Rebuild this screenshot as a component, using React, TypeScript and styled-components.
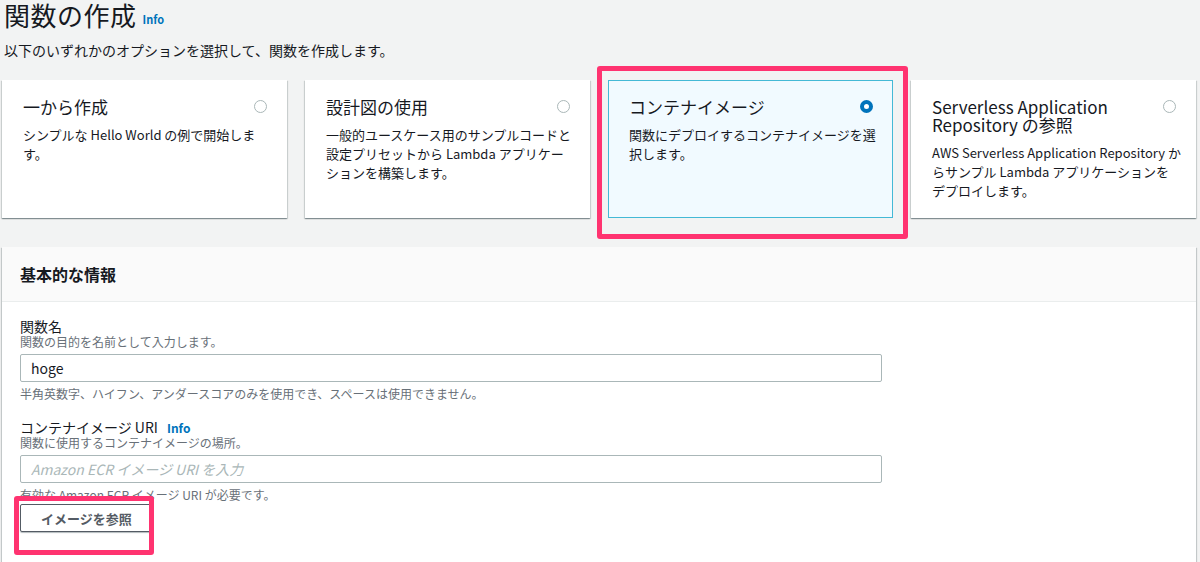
import React from 'react'
import styled, { createGlobalStyle } from 'styled-components'

const GlobalStyle = createGlobalStyle`
  html, body {
    margin: 0;
    padding: 0;
    background: #f2f3f3;
  }
  body {
    font-family: "Noto Sans CJK JP", "Noto Sans", sans-serif;
    color: #16191f;
  }
`

const Page = styled.div`
  position: relative;
  width: 1200px;
  height: 562px;
  overflow: hidden;
  padding: 0 4px 0 2px;
  box-sizing: border-box;
`

const Title = styled.h1`
  display: flex;
  align-items: center;
  margin: 0;
  padding-left: 2px;
  height: 30px;
  font-size: 26px;
  line-height: 32px;
  font-weight: 400;
  letter-spacing: 0.5px;
`

const InfoLink = styled.a<{ $inline?: boolean }>`
  margin: ${p => (p.$inline ? '0 0 0 9px' : '8px 0 0 6px')};
  font-size: ${p => (p.$inline ? 12 : 11)}px;
  line-height: 16px;
  font-weight: 700;
  color: #0073bb;
  letter-spacing: 0;
  text-decoration: none;
`

const Subtitle = styled.p`
  margin: 10px 0 0;
  padding-left: 2px;
  font-size: 14px;
  line-height: 20px;
`

const CardGrid = styled.div`
  display: grid;
  grid-template-columns: repeat(4, 1fr);
  gap: 18px;
  margin-top: 20px;
`

const Card = styled.div<{ $selected?: boolean }>`
  display: flex;
  flex-direction: column;
  min-height: 138px;
  box-sizing: border-box;
  padding: 17px 14px 0 20px;
  background: ${p => (p.$selected ? '#f1faff' : '#ffffff')};
  border: 1px solid ${p => (p.$selected ? '#44b9d6' : 'transparent')};
  box-shadow: ${p =>
    p.$selected
      ? 'none'
      : '0 1px 1px 0 rgba(0, 28, 36, 0.3), 1px 1px 1px 0 rgba(0, 28, 36, 0.12), -1px 1px 1px 0 rgba(0, 28, 36, 0.12)'};
`

const CardHead = styled.div`
  display: flex;
  align-items: flex-start;
  justify-content: space-between;
  gap: 12px;
`

const CardTitle = styled.div`
  font-size: 17px;
  line-height: 18px;
`

const Radio = styled.span<{ $checked?: boolean }>`
  flex: none;
  width: 13px;
  height: 13px;
  margin: 2px 5px 0 0;
  box-sizing: border-box;
  border-radius: 50%;
  background: #ffffff;
  border: ${p => (p.$checked ? '4px solid #0073bb' : '1px solid #aab7b8')};
`

const CardText = styled.div`
  margin-top: 9px;
  font-size: 13px;
  line-height: 19px;
`

const Panel = styled.section`
  margin-top: 29px;
  background: #ffffff;
  box-shadow: 0 1px 1px 0 rgba(0, 28, 36, 0.3), 1px 1px 1px 0 rgba(0, 28, 36, 0.15),
    -1px 1px 1px 0 rgba(0, 28, 36, 0.15);
`

const PanelHeader = styled.div`
  display: flex;
  align-items: center;
  height: 54px;
  padding-left: 18px;
  background: #fafafa;
  border-bottom: 1px solid #eaeded;
  font-size: 16px;
  font-weight: 700;
`

const PanelBody = styled.div`
  display: flex;
  flex-direction: column;
  gap: 17px;
  padding: 16px 18px 40px;
`

const Field = styled.div`
  display: flex;
  flex-direction: column;
  align-items: flex-start;
`

const Label = styled.label`
  display: flex;
  align-items: baseline;
  font-size: 14px;
  line-height: 17px;
`

const Description = styled.div`
  font-size: 12px;
  line-height: 14px;
  color: #687078;
`

const Hint = styled.div`
  margin-top: 4px;
  font-size: 12px;
  line-height: 16px;
  color: #687078;
`

const TextInput = styled.input`
  width: 862px;
  height: 28px;
  margin-top: 5px;
  box-sizing: border-box;
  padding: 0 10px;
  border: 1px solid #aab7b8;
  border-radius: 2px;
  background: #ffffff;
  font-family: "Noto Sans CJK JP", "Noto Sans", sans-serif;
  font-size: 14px;
  color: #16191f;
  outline: none;

  &::placeholder {
    color: #aab7b8;
    font-style: italic;
  }
`

const Button = styled.button`
  margin-top: 1px;
  height: 28px;
  padding: 0 20px;
  background: #ffffff;
  border: 1px solid #545b64;
  border-radius: 2px;
  box-shadow: 0 1px 1px 0 rgba(0, 28, 36, 0.3);
  font-family: "Noto Sans CJK JP", "Noto Sans", sans-serif;
  font-size: 13px;
  font-weight: 700;
  color: #545b64;
`

const Highlight = styled.div<{ $x: number; $y: number; $w: number; $h: number }>`
  position: absolute;
  left: ${p => p.$x}px;
  top: ${p => p.$y}px;
  width: ${p => p.$w}px;
  height: ${p => p.$h}px;
  box-sizing: border-box;
  border: 5px solid #ff3370;
  border-radius: 3px;
  pointer-events: none;
`

const cards = [
  { title: '一から作成', text: 'シンプルな Hello World の例で開始します。' },
  { title: '設計図の使用', text: '一般的ユースケース用のサンプルコードと設定プリセットから Lambda アプリケーションを構築します。' },
  { title: 'コンテナイメージ', text: '関数にデプロイするコンテナイメージを選択します。', selected: true },
  {
    title: 'Serverless Application Repository の参照',
    text: 'AWS Serverless Application Repository からサンプル Lambda アプリケーションをデプロイします。',
  },
]

const App: React.FC = () => {
  return (
    <>
      <GlobalStyle />
      <Page>
        <Title>
          関数の作成<InfoLink>Info</InfoLink>
        </Title>
        <Subtitle>以下のいずれかのオプションを選択して、関数を作成します。</Subtitle>

        <CardGrid>
          {cards.map(card => (
            <Card key={card.title} $selected={card.selected}>
              <CardHead>
                <CardTitle>{card.title}</CardTitle>
                <Radio $checked={card.selected} />
              </CardHead>
              <CardText>{card.text}</CardText>
            </Card>
          ))}
        </CardGrid>

        <Panel>
          <PanelHeader>基本的な情報</PanelHeader>
          <PanelBody>
            <Field>
              <Label>関数名</Label>
              <Description>関数の目的を名前として入力します。</Description>
              <TextInput defaultValue="hoge" />
              <Hint>半角英数字、ハイフン、アンダースコアのみを使用でき、スペースは使用できません。</Hint>
            </Field>
            <Field>
              <Label>
                コンテナイメージ URI<InfoLink $inline>Info</InfoLink>
              </Label>
              <Description>関数に使用するコンテナイメージの場所。</Description>
              <TextInput placeholder="Amazon ECR イメージ URI を入力" />
              <Hint>有効な Amazon ECR イメージ URI が必要です。</Hint>
              <Button>イメージを参照</Button>
            </Field>
          </PanelBody>
        </Panel>

        {/* 注釈の枠 */}
        <Highlight $x={597} $y={66} $w={311} $h={173} />
        <Highlight $x={14} $y={496} $w={140} $h={59} />
      </Page>
    </>
  )
}

export default App
